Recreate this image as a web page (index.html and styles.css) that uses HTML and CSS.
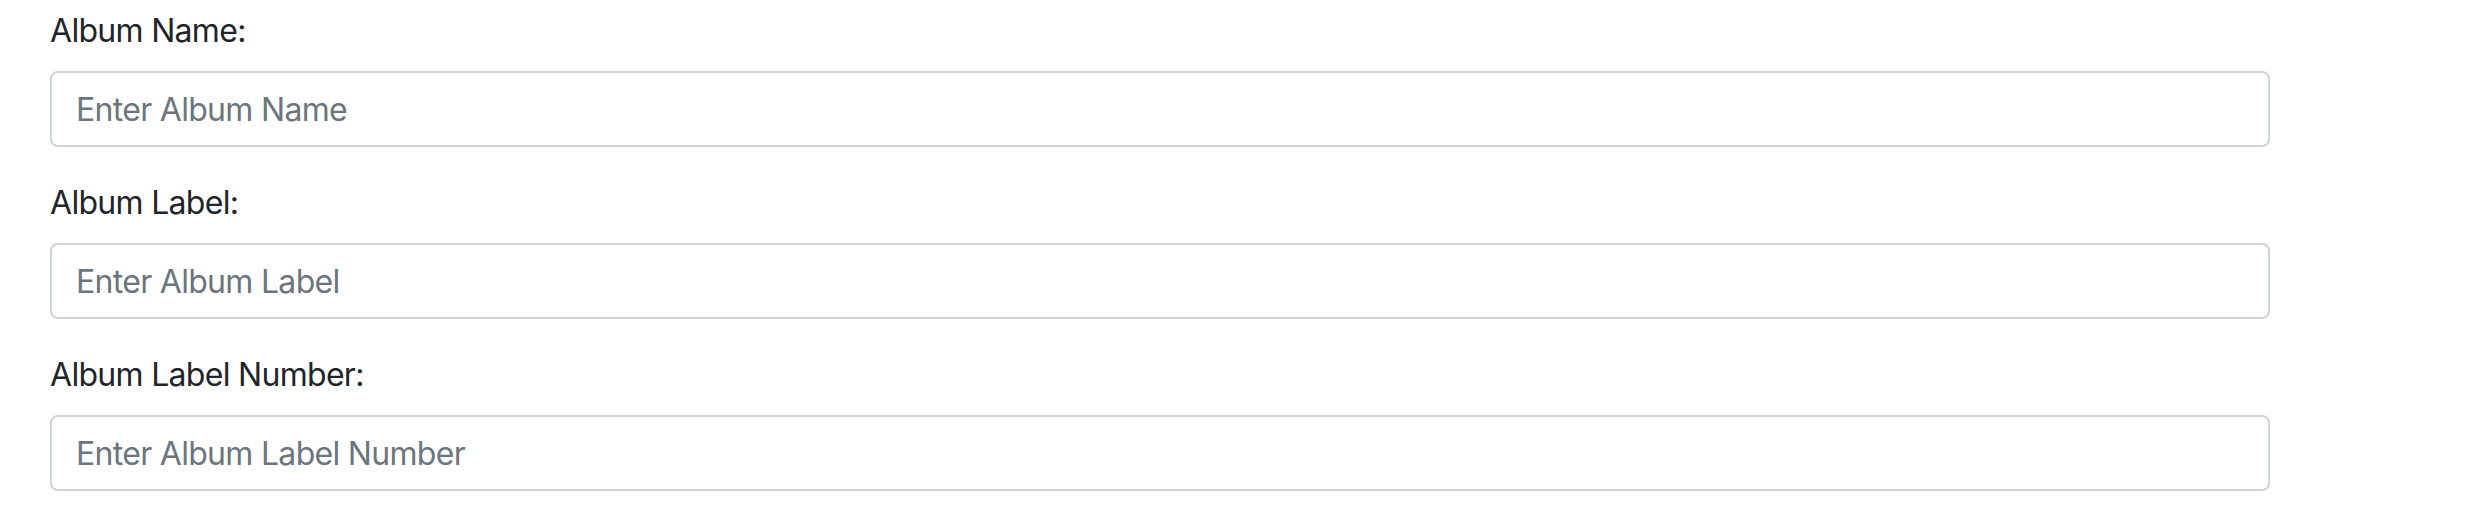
FILE: index.html
```html
<!DOCTYPE html>
<html lang="en">
<head>
<meta charset="utf-8">
<title>Album form</title>
<link rel="stylesheet" href="styles.css">
</head>
<body>
<form class="album-form">
  <div class="form-group">
    <label class="form-label" for="albumName">Album Name:</label>
    <input class="form-control" id="albumName" type="text" placeholder="Enter Album Name">
  </div>
  <div class="form-group">
    <label class="form-label" for="albumLabel">Album Label:</label>
    <input class="form-control" id="albumLabel" type="text" placeholder="Enter Album Label">
  </div>
  <div class="form-group">
    <label class="form-label" for="albumLabelNumber">Album Label Number:</label>
    <input class="form-control" id="albumLabelNumber" type="text" placeholder="Enter Album Label Number">
  </div>
</form>
</body>
</html>
```

FILE: styles.css
```css
html, body {
  margin: 0;
  padding: 0;
  background: #ffffff;
}

body {
  font-family: Inter, "Liberation Sans", sans-serif;
  font-size: 32px;
  line-height: 48px;
  letter-spacing: -0.7px;
  color: #212529;
}

.album-form {
  display: flex;
  flex-direction: column;
  gap: 32px;
  width: 2220px;
  padding: 7px 0 0 50px;
}

.form-group {
  display: flex;
  flex-direction: column;
  gap: 16px;
}

.form-label {
  display: block;
  height: 48px;
}

.form-control {
  box-sizing: border-box;
  display: block;
  width: 100%;
  height: 76px;
  margin: 0;
  padding: 12px 24px;
  font-family: inherit;
  font-size: 32px;
  line-height: 48px;
  letter-spacing: -0.7px;
  color: #495057;
  background: #ffffff;
  border: 2px solid #ced4da;
  border-radius: 8px;
  outline: none;
}

.form-control::placeholder {
  color: #6c757d;
  opacity: 1;
}
```
